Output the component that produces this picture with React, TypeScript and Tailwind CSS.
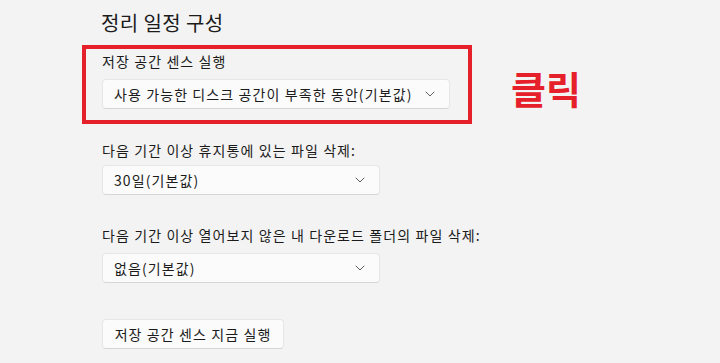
import React from "react";

const font = { fontFamily: '"Noto Sans CJK KR", "Noto Sans", sans-serif' };

function Chevron() {
  return (
    <svg width="10" height="6" viewBox="0 0 10 6" fill="none" className="shrink-0">
      <path d="M1 1 L5 5 L9 1" stroke="#616161" strokeWidth="1" strokeLinecap="round" strokeLinejoin="round" />
    </svg>
  );
}

function Dropdown({ text, w }: { text: string; w: string }) {
  return (
    <div
      className={`${w} h-[30px] flex items-center justify-between pl-[11px] pr-[14px] bg-[#fbfbfb] border border-[#e6e6e6] border-b-[#d6d6d6] rounded-[4px] text-[14px] text-[#1b1b1b] tracking-[1.1px]`}
    >
      <span className="leading-none">{text}</span>
      <Chevron />
    </div>
  );
}

export default function App() {
  return (
    <div className="relative w-[720px] h-[363px] bg-[#f3f3f3] overflow-hidden pl-[82px]" style={font}>
      <div className="pt-[10px] pl-[19px] text-[20px] leading-[26px] text-[#1b1b1b] tracking-[0.4px]">정리 일정 구성</div>

      <div className="mt-[9px] w-[390px] h-[79px] border-4 border-[#e6202b] pl-[16px] pt-[2px]">
        <div className="text-[14px] leading-[20px] text-[#1b1b1b] tracking-[1.1px]">저장 공간 센스 실행</div>
        <div className="mt-[8px]">
          <Dropdown text="사용 가능한 디스크 공간이 부족한 동안(기본값)" w="w-[348px]" />
        </div>
      </div>

      <div className="pl-[20px]">
        <div className="mt-[16px] text-[14px] leading-[20px] text-[#1b1b1b] tracking-[1.1px]">다음 기간 이상 휴지통에 있는 파일 삭제:</div>
        <div className="mt-[5px]">
          <Dropdown text="30일(기본값)" w="w-[278px]" />
        </div>

        <div className="mt-[30px] text-[14px] leading-[20px] text-[#1b1b1b] tracking-[1.1px]">다음 기간 이상 열어보지 않은 내 다운로드 폴더의 파일 삭제:</div>
        <div className="mt-[8px]">
          <Dropdown text="없음(기본값)" w="w-[278px]" />
        </div>

        <div className="mt-[36px] w-[182px] h-[30px] flex items-center justify-center bg-[#fbfbfb] border border-[#e6e6e6] border-b-[#d6d6d6] rounded-[4px] text-[14px] text-[#1b1b1b] tracking-[1.1px]">
          저장 공간 센스 지금 실행
        </div>
      </div>

      <div className="absolute left-[511px] top-[64px] text-[38px] leading-[48px] font-bold text-[#e6202b]">클릭</div>
    </div>
  );
}
